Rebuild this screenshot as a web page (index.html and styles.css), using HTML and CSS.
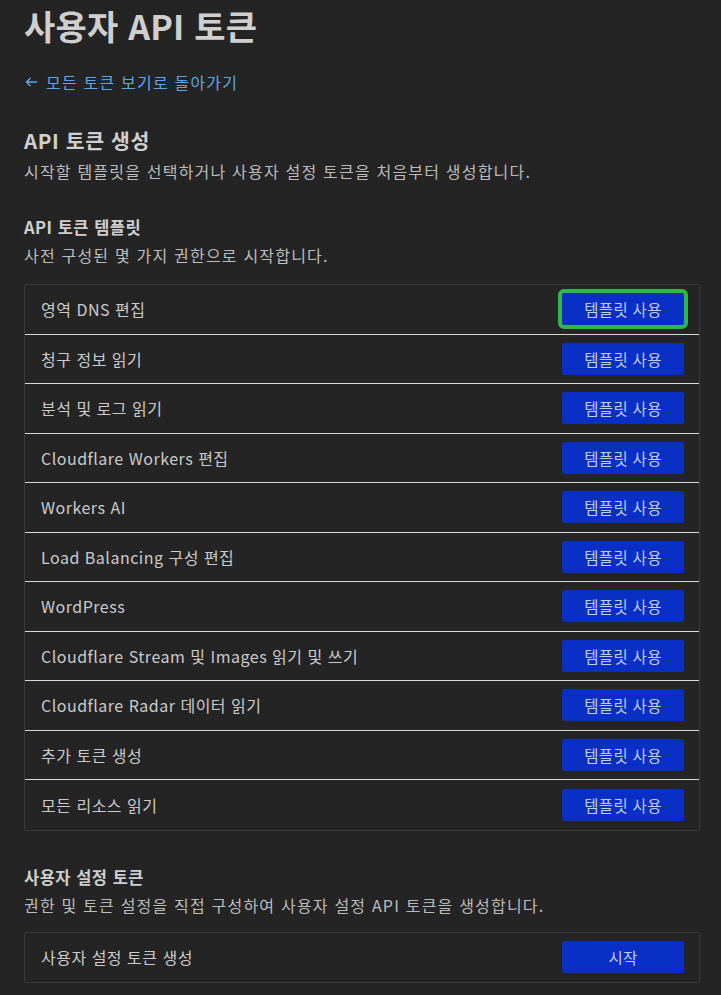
FILE: index.html
```html
<!DOCTYPE html>
<html lang="ko">
<head>
  <meta charset="UTF-8">
  <title>사용자 API 토큰</title>
  <link rel="stylesheet" href="styles.css">
</head>
<body>

  <div class="page">
    <h1>사용자 API 토큰</h1>

    <a class="back-link" href="#">
      <svg width="15" height="14" viewBox="0 0 15 14" fill="none" stroke="currentColor" stroke-width="1.4">
        <path d="M13 7H2.5M6.5 3L2.5 7l4 4"/>
      </svg>
      모든 토큰 보기로 돌아가기
    </a>

    <h2>API 토큰 생성</h2>
    <p class="desc">시작할 템플릿을 선택하거나 사용자 설정 토큰을 처음부터 생성합니다.</p>

    <h3>API 토큰 템플릿</h3>
    <p class="desc">사전 구성된 몇 가지 권한으로 시작합니다.</p>

    <ul class="card" id="templateList"></ul>

    <h3 class="custom-title">사용자 설정 토큰</h3>
    <p class="desc">권한 및 토큰 설정을 직접 구성하여 사용자 설정 API 토큰을 생성합니다.</p>

    <ul class="card custom-card">
      <li>
        <span>사용자 설정 토큰 생성</span>
        <button class="use-btn">시작</button>
      </li>
    </ul>
  </div>

  <script>
    // ================= TEMPLATES =================
    const templates = [
      '영역 DNS 편집',
      '청구 정보 읽기',
      '분석 및 로그 읽기',
      'Cloudflare Workers 편집',
      'Workers AI',
      'Load Balancing 구성 편집',
      'WordPress',
      'Cloudflare Stream 및 Images 읽기 및 쓰기',
      'Cloudflare Radar 데이터 읽기',
      '추가 토큰 생성',
      '모든 리소스 읽기'
    ];

    const templateList = document.getElementById('templateList');

    templates.forEach((name, index) => {
      const li = document.createElement('li');
      const label = document.createElement('span');
      label.textContent = name;
      const btn = document.createElement('button');
      btn.textContent = '템플릿 사용';
      btn.className = 'use-btn';
      if (index === 0) btn.classList.add('focused');
      li.appendChild(label);
      li.appendChild(btn);
      templateList.appendChild(li);
    });
  </script>

</body>
</html>
```

FILE: styles.css
```css
* {
  box-sizing: border-box;
  font-family: 'Noto Sans CJK KR', 'Noto Sans', sans-serif;
}

body {
  margin: 0;
  background: #242424;
  color: #c9c9c9;
}

.page {
  padding: 0 21px 12px 24px;
}

h1 {
  margin: 0;
  padding-top: 2px;
  font-size: 34px;
  font-weight: 700;
  line-height: 48px;
  letter-spacing: 0.2px;
  color: #cfcfcf;
}

.back-link {
  display: inline-flex;
  align-items: center;
  gap: 7px;
  margin-top: 21px;
  font-size: 16px;
  line-height: 22px;
  letter-spacing: 1.2px;
  color: #5fa6e6;
  text-decoration: none;
}

h2 {
  margin: 32px 0 0;
  font-size: 20.5px;
  font-weight: 700;
  line-height: 28px;
  letter-spacing: 0.6px;
  color: #cfcfcf;
}

h3 {
  margin: 33px 0 0;
  font-size: 16.5px;
  font-weight: 700;
  line-height: 24px;
  letter-spacing: 0.5px;
  color: #cfcfcf;
}

.custom-title {
  margin-top: 34px;
}

h2 + .desc {
  margin-top: 6px;
}

.desc {
  margin: 5px 0 0;
  font-size: 16px;
  line-height: 22px;
  letter-spacing: 1.2px;
  color: #bdbdbd;
}

.card {
  list-style: none;
  margin: 18px 0 0;
  padding: 0;
  border: 1px solid #3a3a3a;
  border-radius: 2px;
}

.custom-card {
  margin-top: 16px;
}

.card li {
  display: flex;
  justify-content: space-between;
  align-items: center;
  height: 49.5px;
  padding: 0 15px 0 16px;
  font-size: 16px;
  letter-spacing: 0.5px;
  color: #cbcbcb;
  border-bottom: 1px solid #d8d8d8;
}

.card li:last-child {
  border-bottom: none;
}

.use-btn {
  width: 122px;
  height: 32px;
  padding: 0;
  border: none;
  border-radius: 3px;
  background: #0a2fc4;
  color: #c3cdef;
  font-size: 15.5px;
  letter-spacing: 0.3px;
  cursor: pointer;
}

.use-btn.focused {
  outline: 4px solid #2db84c;
  outline-offset: 0;
  border-radius: 2px;
}
```
